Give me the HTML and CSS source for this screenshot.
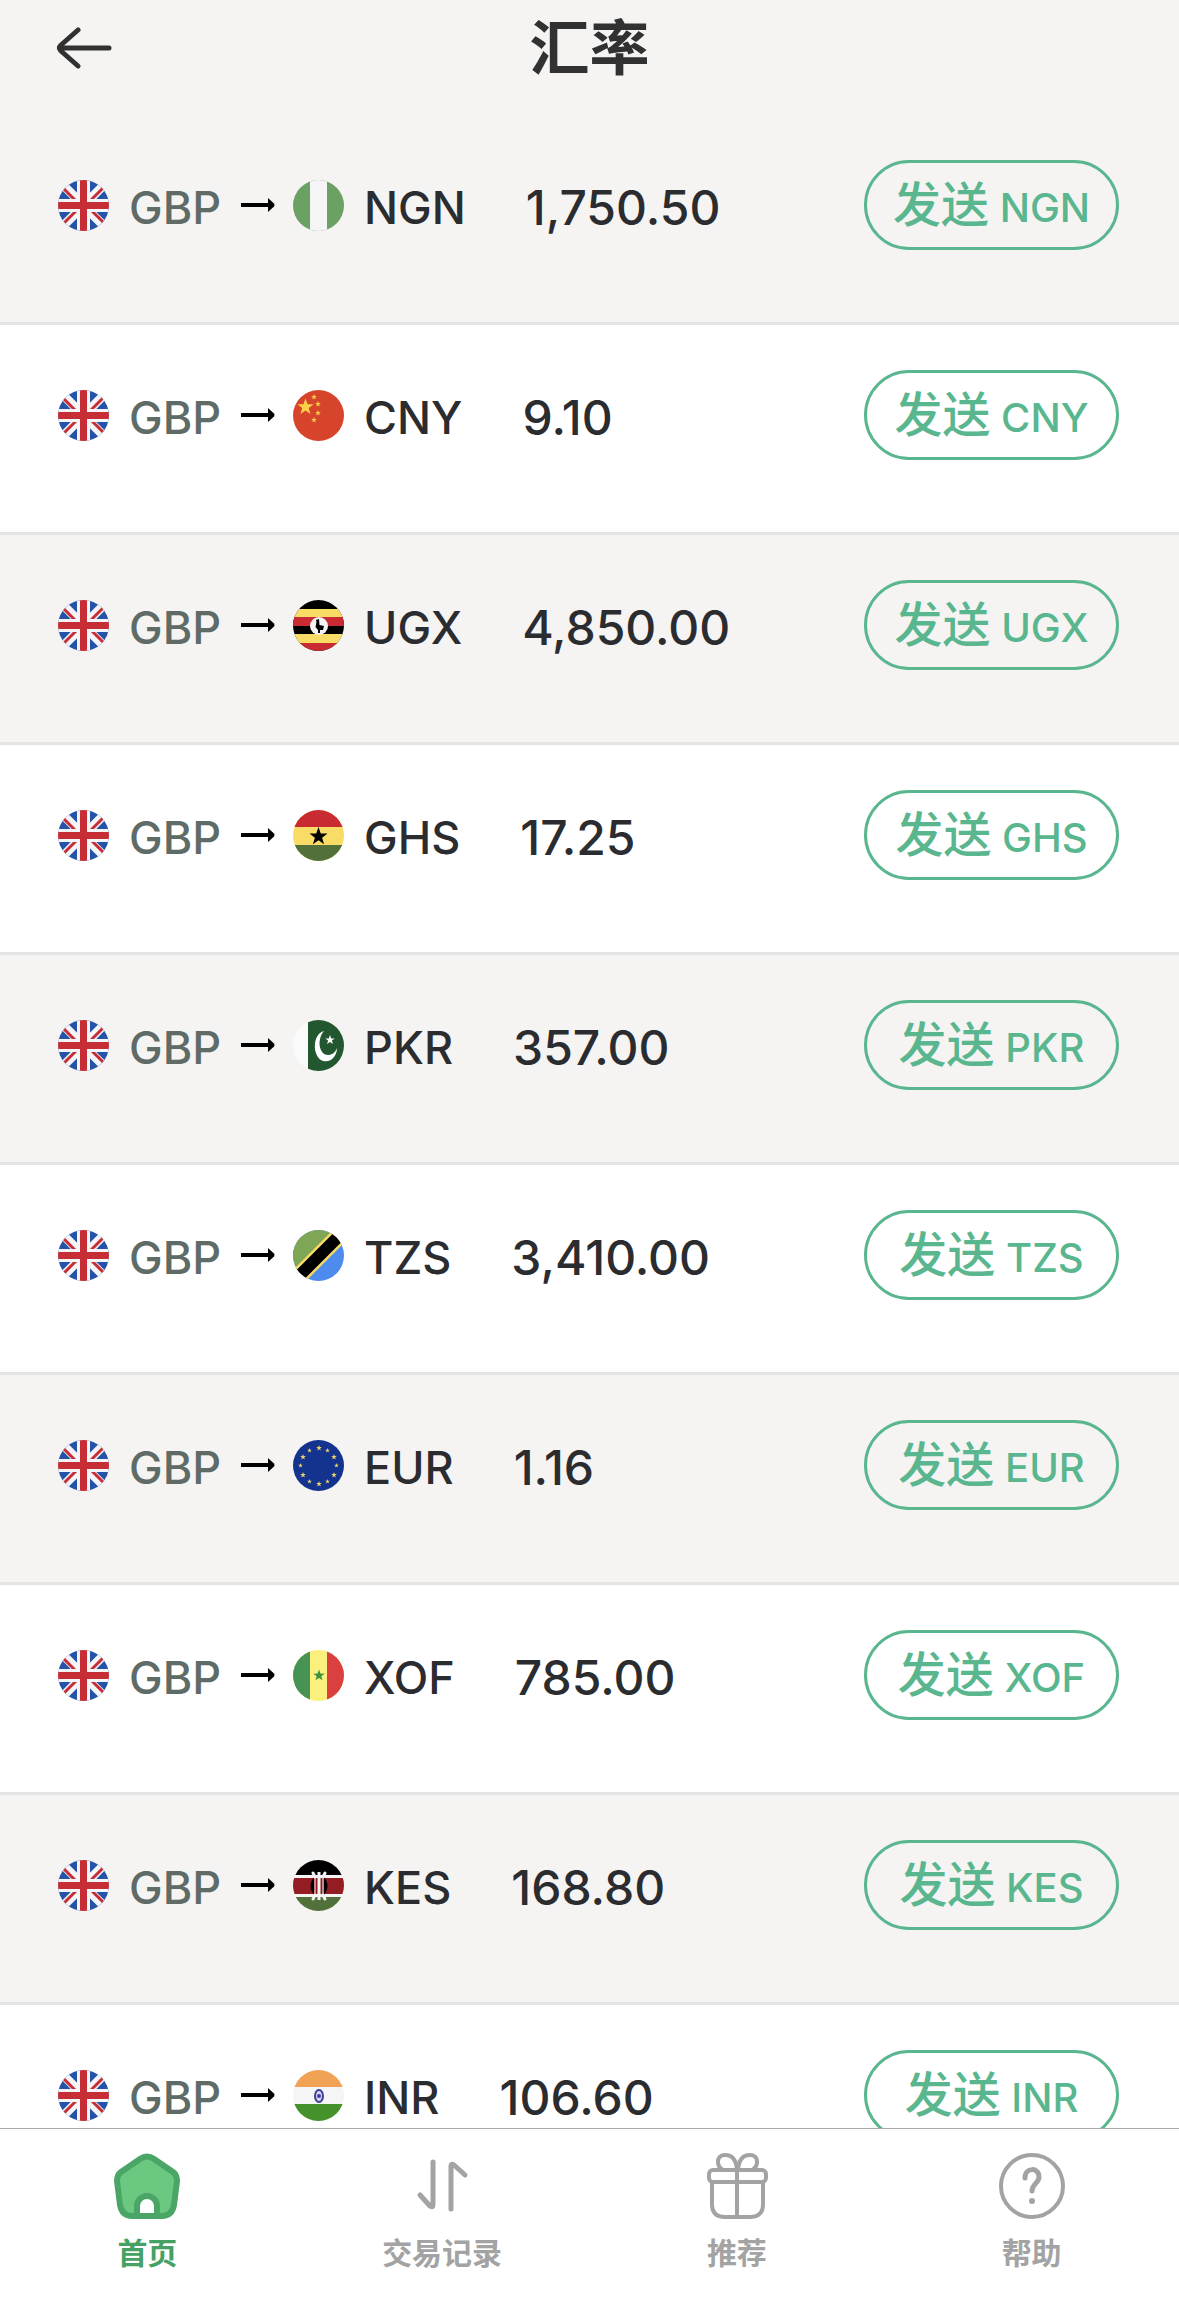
FILE: index.html
```html
<!DOCTYPE html>
<html lang="zh-CN">
<head>
  <meta charset="UTF-8" />
  <meta name="viewport" content="width=device-width, initial-scale=1.0"/>
  <title>汇率</title>
  <link rel="stylesheet" href="styles.css">
</head>
<body>
  <!-- Shared symbols -->
  <svg class="sprite" aria-hidden="true">
    <symbol id="star" viewBox="-10 -10 20 20">
      <path d="M0-10 2.4-3.2 9.5-3.1 3.8 1.2 5.9 8.1 0 4-5.9 8.1-3.8 1.2-9.5-3.1-2.4-3.2z"/>
    </symbol>
    <symbol id="arrow" viewBox="0 0 34 14">
      <path d="M0 7H28" stroke="#000" stroke-width="4"/>
      <path d="M27 0 33 5.500Q34 7 33 8.500L27 14z"/>
    </symbol>
    <symbol id="flag-gb" viewBox="0 0 51 51">
      <path fill="#2453a8" d="M0 0h51v51H0z"/>
      <path stroke="#f5f5f7" stroke-width="9" d="M3 3 48 48M48 3 3 48"/>
      <path stroke="#c62d35" stroke-width="3" d="M5 8 20 23M48 5 31 22M3 46 20 29M31 28 46 43"/>
      <path fill="#f5f5f7" d="M19 0h13v51H19zM0 19h51v13H0z"/>
      <path fill="#c62d35" d="M22 0h7v51h-7zM0 22h51v7H0z"/>
    </symbol>
    <symbol id="flag-ng" viewBox="0 0 51 51">
      <path fill="#6ba162" d="M0 0h51v51H0z"/>
      <path fill="#f5f5f7" d="M17 0h17v51H17z"/>
    </symbol>
    <symbol id="flag-cn" viewBox="0 0 51 51">
      <path fill="#d6442b" d="M0 0h51v51H0z"/>
      <g fill="#fcd04b">
        <use href="#star" x="4" y="8" width="17" height="18"/>
        <use href="#star" x="18" y="4" width="6" height="6"/>
        <use href="#star" x="22" y="11" width="6" height="6"/>
        <use href="#star" x="22" y="20" width="6" height="6"/>
        <use href="#star" x="18" y="27" width="6" height="6"/>
      </g>
    </symbol>
    <symbol id="flag-ug" viewBox="0 0 51 51">
      <path d="M0 0h51v51H0z"/>
      <path fill="#f9dc66" d="M0 9h51v8H0zM0 34h51v9H0z"/>
      <path fill="#c82c32" d="M0 17h51v9H0zM0 43h51v8H0z"/>
      <circle cx="26" cy="26" r="9" fill="#f5f5f5"/>
      <path d="M23 20 26 19 26.500 25 31 26 30 30 27 30V33H25V30L22.500 27 23.500 22z"/>
    </symbol>
    <symbol id="flag-gh" viewBox="0 0 51 51">
      <path fill="#f9dc66" d="M0 0h51v51H0z"/>
      <path fill="#c82c32" d="M0 0h51v17H0z"/>
      <path fill="#52713a" d="M0 35h51v16H0z"/>
      <use href="#star" x="16" y="17" width="19" height="19"/>
    </symbol>
    <symbol id="flag-pk" viewBox="0 0 51 51">
      <path fill="#fafafa" d="M0 0h51v51H0z"/>
      <path fill="#23572f" d="M15 0h36v51H15z"/>
      <path fill="#fff" d="M31 11C19 14 19 37 30 41C38 43 44 36 44 28C40 38 30 36 28 30C25 24 27 15 31 11z"/>
      <use href="#star" x="32" y="14" width="10" height="12" fill="#fff"/>
    </symbol>
    <symbol id="flag-tz" viewBox="0 0 51 51">
      <path fill="#4e8bee" d="M0 0h51v51H0z"/>
      <path fill="#7ea655" d="M0 0h51L0 51z"/>
      <path stroke="#f9dc66" stroke-width="17" d="M-4 56 56-4"/>
      <path stroke="#000" stroke-width="12" d="M-4 56 56-4"/>
    </symbol>
    <symbol id="flag-eu" viewBox="0 0 51 51">
      <path fill="#14338f" d="M0 0h51v51H0z"/>
      <g fill="#e9d36b">
        <use href="#star" x="23" y="5" width="6" height="6"/>
        <use href="#star" x="32" y="8" width="5" height="5"/>
        <use href="#star" x="38" y="14" width="6" height="6"/>
        <use href="#star" x="41" y="23" width="5" height="5"/>
        <use href="#star" x="38" y="32" width="6" height="6"/>
        <use href="#star" x="32" y="39" width="5" height="5"/>
        <use href="#star" x="23" y="41" width="6" height="6"/>
        <use href="#star" x="14" y="39" width="5" height="5"/>
        <use href="#star" x="7" y="32" width="6" height="6"/>
        <use href="#star" x="5" y="23" width="5" height="5"/>
        <use href="#star" x="7" y="14" width="6" height="6"/>
        <use href="#star" x="14" y="8" width="5" height="5"/>
      </g>
    </symbol>
    <symbol id="flag-sn" viewBox="0 0 51 51">
      <path fill="#fcf07c" d="M0 0h51v51H0z"/>
      <path fill="#469354" d="M0 0h17v51H0z"/>
      <path fill="#da4040" d="M34 0h17v51H34z"/>
      <use href="#star" x="20" y="19" width="12" height="13" fill="#3d9142"/>
    </symbol>
    <symbol id="flag-ke" viewBox="0 0 51 51">
      <path fill="#f5f5f5" d="M0 0h51v51H0z"/>
      <path d="M0 0h51v15H0z"/>
      <path fill="#931d22" d="M0 18h51v16H0z"/>
      <path fill="#52713a" d="M0 37h51v14H0z"/>
      <path d="M22 16Q13 26 22 36zM30 16Q39 26 30 36z"/>
      <path fill="#931d22" d="M21 18h10v16H21z"/>
      <path fill="none" stroke="#f5f5f5" stroke-width="3" d="M26 12V40"/>
      <path fill="none" stroke="#f5f5f5" stroke-width="1" d="M22 16V36M30 16V36"/>
      <path fill="none" stroke="#f5f5f5" stroke-width="3" stroke-linecap="round" d="M20 13 22 17M20 39 22 35M32 13 30 17M32 39 30 35"/>
    </symbol>
    <symbol id="flag-in" viewBox="0 0 51 51">
      <path fill="#f5f5f5" d="M0 0h51v51H0z"/>
      <path fill="#f1a255" d="M0 0h51v17H0z"/>
      <path fill="#45922a" d="M0 34h51v17H0z"/>
      <ellipse cx="26" cy="26" rx="4" ry="6" fill="#d5d7ee" stroke="#3e3f99" stroke-width="2"/>
      <circle cx="26" cy="26" r="2" fill="#3e3f99"/>
    </symbol>
  </svg>

  <div class="app">
    <header class="header">
      <button type="button" class="back" aria-label="返回">
        <svg viewBox="0 0 56 42" fill="none" stroke="#313131" stroke-width="5" stroke-linecap="round" stroke-linejoin="round">
          <path d="M22 3 5 18Q2 21 5 24L22 39M4 21H53"/>
        </svg>
      </button>
      <h1>汇率</h1>
    </header>

    <main class="content">
      <ul class="rates">
        <li class="rate">
          <svg class="flag"><use href="#flag-gb"/></svg>
          <span class="from">GBP</span>
          <svg class="arrow"><use href="#arrow"/></svg>
          <svg class="flag"><use href="#flag-ng"/></svg>
          <span class="to">NGN</span>
          <span class="value">1,750.50</span>
          <button type="button" class="send"><span class="verb">发送</span> NGN</button>
        </li>
        <li class="rate">
          <svg class="flag"><use href="#flag-gb"/></svg>
          <span class="from">GBP</span>
          <svg class="arrow"><use href="#arrow"/></svg>
          <svg class="flag"><use href="#flag-cn"/></svg>
          <span class="to">CNY</span>
          <span class="value">9.10</span>
          <button type="button" class="send"><span class="verb">发送</span> CNY</button>
        </li>
        <li class="rate">
          <svg class="flag"><use href="#flag-gb"/></svg>
          <span class="from">GBP</span>
          <svg class="arrow"><use href="#arrow"/></svg>
          <svg class="flag"><use href="#flag-ug"/></svg>
          <span class="to">UGX</span>
          <span class="value">4,850.00</span>
          <button type="button" class="send"><span class="verb">发送</span> UGX</button>
        </li>
        <li class="rate">
          <svg class="flag"><use href="#flag-gb"/></svg>
          <span class="from">GBP</span>
          <svg class="arrow"><use href="#arrow"/></svg>
          <svg class="flag"><use href="#flag-gh"/></svg>
          <span class="to">GHS</span>
          <span class="value">17.25</span>
          <button type="button" class="send"><span class="verb">发送</span> GHS</button>
        </li>
        <li class="rate">
          <svg class="flag"><use href="#flag-gb"/></svg>
          <span class="from">GBP</span>
          <svg class="arrow"><use href="#arrow"/></svg>
          <svg class="flag"><use href="#flag-pk"/></svg>
          <span class="to">PKR</span>
          <span class="value">357.00</span>
          <button type="button" class="send"><span class="verb">发送</span> PKR</button>
        </li>
        <li class="rate">
          <svg class="flag"><use href="#flag-gb"/></svg>
          <span class="from">GBP</span>
          <svg class="arrow"><use href="#arrow"/></svg>
          <svg class="flag"><use href="#flag-tz"/></svg>
          <span class="to">TZS</span>
          <span class="value">3,410.00</span>
          <button type="button" class="send"><span class="verb">发送</span> TZS</button>
        </li>
        <li class="rate">
          <svg class="flag"><use href="#flag-gb"/></svg>
          <span class="from">GBP</span>
          <svg class="arrow"><use href="#arrow"/></svg>
          <svg class="flag"><use href="#flag-eu"/></svg>
          <span class="to">EUR</span>
          <span class="value">1.16</span>
          <button type="button" class="send"><span class="verb">发送</span> EUR</button>
        </li>
        <li class="rate">
          <svg class="flag"><use href="#flag-gb"/></svg>
          <span class="from">GBP</span>
          <svg class="arrow"><use href="#arrow"/></svg>
          <svg class="flag"><use href="#flag-sn"/></svg>
          <span class="to">XOF</span>
          <span class="value">785.00</span>
          <button type="button" class="send"><span class="verb">发送</span> XOF</button>
        </li>
        <li class="rate">
          <svg class="flag"><use href="#flag-gb"/></svg>
          <span class="from">GBP</span>
          <svg class="arrow"><use href="#arrow"/></svg>
          <svg class="flag"><use href="#flag-ke"/></svg>
          <span class="to">KES</span>
          <span class="value">168.80</span>
          <button type="button" class="send"><span class="verb">发送</span> KES</button>
        </li>
        <li class="rate">
          <svg class="flag"><use href="#flag-gb"/></svg>
          <span class="from">GBP</span>
          <svg class="arrow"><use href="#arrow"/></svg>
          <svg class="flag"><use href="#flag-in"/></svg>
          <span class="to">INR</span>
          <span class="value">106.60</span>
          <button type="button" class="send"><span class="verb">发送</span> INR</button>
        </li>
      </ul>
    </main>

    <nav class="tabs">
      <a href="#home" class="tab active">
        <svg viewBox="0 0 66 66" stroke-linejoin="round">
          <path fill="#6bc881" stroke="#4aa566" stroke-width="6" d="M26 6Q33 1 40 6L59 19Q63 22 63 28L60 52Q58 63 48 63H18Q8 63 6 52L3 28Q3 22 7 19z"/>
          <path fill="#fff" stroke="#4aa566" stroke-width="6" d="M23 63V53A10 10 0 0 1 43 53V63z"/>
        </svg>
        首页
      </a>
      <a href="#history" class="tab">
        <svg viewBox="0 0 66 66" fill="none" stroke="#a3a3a3" stroke-width="5" stroke-linecap="round" stroke-linejoin="round">
          <path d="M24 9V52Q24 55 21 53L11 42M42 56V13Q42 10 45 12L56 22"/>
        </svg>
        交易记录
      </a>
      <a href="#refer" class="tab">
        <svg viewBox="0 0 66 66" fill="none" stroke="#a3a3a3" stroke-width="4" stroke-linecap="round" stroke-linejoin="round">
          <rect x="5" y="17" width="57" height="12" rx="4"/>
          <path d="M8 29V51Q8 64 21 64H46Q59 64 59 51V29M33 17V64M33 17Q32 2 21 2C12 2 12 13 19 17M34 17Q35 2 46 2C55 2 55 13 48 17"/>
        </svg>
        推荐
      </a>
      <a href="#help" class="tab">
        <svg viewBox="0 0 66 66" fill="none" stroke="#a3a3a3" stroke-width="4" stroke-linecap="round">
          <circle cx="33" cy="33" r="31"/>
          <path stroke-width="5" d="M26 25C26 14 40 14 40 24C40 30 33 31 33 38"/>
          <circle cx="33" cy="48" r="3" fill="#a3a3a3" stroke="none"/>
        </svg>
        帮助
      </a>
    </nav>
  </div>
</body>
</html>
```

FILE: styles.css
```css
* {
  box-sizing: border-box;
}

body {
  font-family: Inter, 'Noto Sans CJK SC', sans-serif;
  background: #f5f4f3;
  color: #2b2c2f;
  margin: 0;
}

.sprite {
  display: none;
}

.app {
  display: flex;
  flex-direction: column;
  height: 100vh;
}

/* Header */
.header {
  display: grid;
  grid-template-columns: 1fr auto 1fr;
  align-items: center;
  padding: 0 56px 20px;
  height: 115px;
  flex-shrink: 0;
}

.header h1 {
  margin: 0;
  font-size: 60px;
  line-height: 88px;
  font-weight: 700;
  color: #313131;
}

.back {
  background: none;
  border: none;
  padding: 0;
  width: 56px;
  height: 42px;
  cursor: pointer;
}

.back svg {
  display: block;
}

/* Rates */
.content {
  flex: 1;
  min-height: 0;
  overflow-y: auto;
  scrollbar-width: none;
}

.rates {
  list-style: none;
  margin: 0;
  padding: 0;
}

.rate {
  display: flex;
  align-items: center;
  padding: 45px 60px 72px 58px;
  border-bottom: 3px solid #e4e4e4;
  font-size: 45px;
  line-height: 54px;
  font-weight: 500;
}

.rate:nth-child(even) {
  background: #fff;
}

.flag {
  width: 51px;
  height: 51px;
  border-radius: 50%;
  flex-shrink: 0;
}

.from,
.to,
.value {
  padding-top: 5px;
}

.from {
  color: #5e6b66;
  margin: 0 20px;
}

.arrow {
  width: 34px;
  height: 14px;
  margin-right: 18px;
}

.to {
  margin: 0 60px 0 20px;
}

.value {
  font-size: 48px;
}

.send {
  margin-left: auto;
  width: 255px;
  height: 90px;
  padding: 2px 0 0;
  background: none;
  border: 3px solid #5ab68e;
  border-radius: 45px;
  color: #5ab68e;
  font-family: inherit;
  font-size: 40px;
  font-weight: 500;
  line-height: 60px;
  cursor: pointer;
}

.verb {
  font-size: 48px;
}

/* Bottom tabs */
.tabs {
  display: flex;
  background: #fff;
  border-top: 1px solid #a9a9a9;
  flex-shrink: 0;
}

.tab {
  flex: 1;
  display: flex;
  flex-direction: column;
  align-items: center;
  gap: 12px;
  padding: 24px 0 35px;
  color: #a3a3a3;
  font-size: 30px;
  line-height: 44px;
  font-weight: 700;
  text-decoration: none;
}

.tab svg {
  width: 66px;
  height: 66px;
}

.tab.active {
  color: #45a164;
}
```
